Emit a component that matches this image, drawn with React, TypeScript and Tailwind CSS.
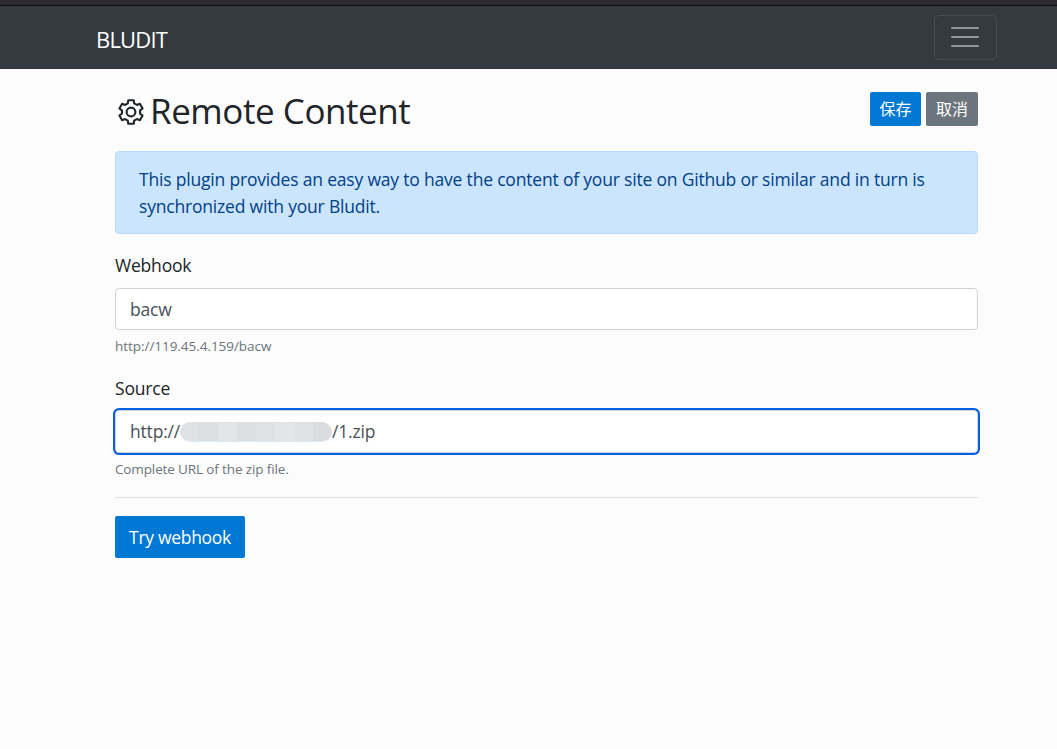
import React from 'react';

const teeth = Array.from({ length: 6 }, (_, i) => i * 60);
const polar = (r: number, deg: number) => {
  const a = (deg * Math.PI) / 180;
  return `${(14 + r * Math.sin(a)).toFixed(2)} ${(14 - r * Math.cos(a)).toFixed(2)}`;
};
const gearPath =
  'M' +
  teeth
    .flatMap((t) => [polar(9.2, t - 20), polar(12.1, t - 13), polar(12.1, t + 13), polar(9.2, t + 20)])
    .join('L') +
  'Z';

function Gear() {
  return (
    <svg className="h-7 w-7 shrink-0" viewBox="0 0 28 28" fill="none" stroke="#212529" strokeWidth="2.1" strokeLinejoin="round">
      <path d={gearPath} />
      <circle cx="14" cy="14" r="4.4" />
    </svg>
  );
}

const blocks = ['bg-[#dfe1e4]', 'bg-[#dcdee0]', 'bg-[#e3e4e5]', 'bg-[#dddee0]', 'bg-[#e0e1e3]', 'bg-[#e4e5e6]', 'bg-[#e0e1e2]', 'bg-[#dadcdf]'];

export default function App() {
  return (
    <div className="min-h-[749px] w-full bg-[#fcfcfc] font-['Open_Sans','Noto_Sans_CJK_SC',sans-serif] text-[17.5px] leading-[27px] tracking-[-0.19px] text-[#212529]">
      <div className="h-[6px] border-b border-[#0c0c0d] bg-[#2b2a33]" />
      <nav className="flex h-[63px] items-center justify-between bg-[#343a40] pr-[60px] pl-[96px]">
        <span className="pt-[3px] text-[22px] tracking-[-0.8px] whitespace-nowrap text-white">BLUDIT</span>
        <button className="flex h-[45px] w-[63px] flex-col items-center justify-center gap-[7px] rounded-[5px] border border-[#484d53] pr-[2px] pb-px" aria-label="Menu">
          <span className="h-[2px] w-7 rounded-full bg-[#94979a]" />
          <span className="h-[2px] w-7 rounded-full bg-[#94979a]" />
          <span className="h-[2px] w-7 rounded-full bg-[#94979a]" />
        </button>
      </nav>
      <main className="ml-[115px] w-[863px]">
        <header className="flex h-[82px] justify-between pt-[23px]">
          <h1 className="flex h-10 items-center gap-[5px] pl-[2px] text-[35px] leading-10 tracking-[-0.45px] whitespace-nowrap">
            <Gear />
            <span className="pb-[2px]">Remote Content</span>
          </h1>
          <div className="flex gap-[5px] text-[16px] tracking-normal text-white">
            <button className="flex h-[34px] w-[51px] items-center justify-center rounded-[2px] bg-[#0078d4]">保存</button>
            <button className="flex h-[34px] w-[52px] items-center justify-center rounded-[2px] bg-[#6c757d]">取消</button>
          </div>
        </header>
        <div className="h-[83px] rounded-[4px] border border-[#b8daff] bg-[#cce5ff] px-[23px] pt-[14px] text-[#004085]">
          <p className="whitespace-nowrap">This plugin provides an easy way to have the content of your site on Github or similar and in turn is</p>
          <p className="whitespace-nowrap">synchronized with your Bludit.</p>
        </div>
        <section className="pt-[18px]">
          <div className="h-[36px]"><label>Webhook</label></div>
          <div className="flex h-[42px] items-center rounded-[4px] border border-[#ced4da] bg-white px-[14px] text-[#495057]"><span>bacw</span></div>
          <div className="pt-[4px] text-[13.5px] leading-[24px] tracking-[-0.04px] text-[#6c757d]"><span>http://119.45.4.159/bacw</span></div>
        </section>
        <section className="pt-[17px]">
          <div className="h-[36px]"><label>Source</label></div>
          <div className="mt-[-1px] flex h-[43px] items-center rounded-[4px] border border-[#ced4da] bg-white px-[14px] text-[#495057] ring-2 ring-[#0060df]">
            <span className="w-[50px] whitespace-nowrap">http://</span>
            <span className="flex h-5 w-[152px] overflow-hidden rounded-full border-b border-[#dce8f5]">
              {blocks.map((c, i) => <span key={i} className={`h-full flex-1 ${c}`} />)}
            </span>
            <span>/1.zip</span>
          </div>
          <div className="pt-[4px] text-[13.5px] leading-[24px] tracking-[-0.13px] text-[#6c757d]"><span>Complete URL of the zip file.</span></div>
        </section>
        <hr className="mt-[16px] mb-[18px] border-t border-[#dfdfdf]" />
        <button className="flex h-[42px] w-[130px] items-center justify-center rounded-[2px] bg-[#0078d4] tracking-[-0.3px] text-white">Try webhook</button>
      </main>
    </div>
  );
}
